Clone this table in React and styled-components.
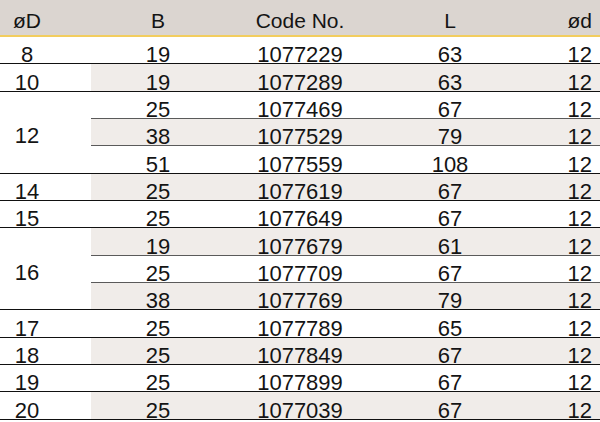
import React from "react";
import styled, { createGlobalStyle } from "styled-components";

const GlobalStyle = createGlobalStyle`
  body {
    margin: 0;
    background: #ffffff;
    font-family: "Liberation Sans", Arial, sans-serif;
    color: #141414;
  }
`;

const groups = [
  { d: 8, rows: [[19, 1077229, 63, 12]] },
  { d: 10, rows: [[19, 1077289, 63, 12]] },
  {
    d: 12,
    rows: [
      [25, 1077469, 67, 12],
      [38, 1077529, 79, 12],
      [51, 1077559, 108, 12],
    ],
  },
  { d: 14, rows: [[25, 1077619, 67, 12]] },
  { d: 15, rows: [[25, 1077649, 67, 12]] },
  {
    d: 16,
    rows: [
      [19, 1077679, 61, 12],
      [25, 1077709, 67, 12],
      [38, 1077769, 79, 12],
    ],
  },
  { d: 17, rows: [[25, 1077789, 65, 12]] },
  { d: 18, rows: [[25, 1077849, 67, 12]] },
  { d: 19, rows: [[25, 1077899, 67, 12]] },
  { d: 20, rows: [[25, 1077039, 67, 12]] },
];

const Table = styled.div`
  width: 600px;
  display: grid;
  grid-template-columns: 91px 134px 150px 150px 75px;
  grid-template-rows: 37px;
  grid-auto-rows: 27.35px;
  font-size: 22px;
`;

const HeadCell = styled.div`
  background: #dbd5d0;
  border-bottom: 2px solid #f2cd5e;
  box-sizing: border-box;
  height: 37px;
  display: flex;
  align-items: flex-end;
  justify-content: ${(p) => (p.$right ? "flex-end" : "center")};
  padding: 0 ${(p) => (p.$right ? "8px" : p.$first ? "37px" : "0")} 4px 0;
  font-size: 21px;
  line-height: 20px;
`;

const DiaCell = styled.div`
  grid-row: span ${(p) => p.$span};
  background: #ffffff;
  border-bottom: 1px solid #111111;
  display: flex;
  justify-content: center;
  align-items: ${(p) => (p.$span > 1 ? "center" : "flex-end")};
  padding-right: 37px;
  padding-top: ${(p) => (p.$span > 1 ? "8px" : "0")};
  line-height: 16px;
`;

const Cell = styled.div`
  background: ${(p) => (p.$shade ? "#f0ece9" : "#ffffff")};
  border-bottom: 1px solid ${(p) => (p.$last ? "#111111" : "#5a5a5a")};
  display: flex;
  align-items: flex-end;
  justify-content: ${(p) => (p.$right ? "flex-end" : "center")};
  padding-right: ${(p) => (p.$right ? "8px" : "0")};
  line-height: 16px;
`;

export default function App() {
  let index = 0;
  return (
    <>
      <GlobalStyle />
      <Table>
        <HeadCell $first>øD</HeadCell>
        <HeadCell>B</HeadCell>
        <HeadCell>Code No.</HeadCell>
        <HeadCell>L</HeadCell>
        <HeadCell $right>ød</HeadCell>
        {groups.map((g) => (
          <React.Fragment key={g.d}>
            <DiaCell $span={g.rows.length}>{g.d}</DiaCell>
            {g.rows.map((r, i) => {
              const shade = index % 2 === 1;
              const last = i === g.rows.length - 1;
              index += 1;
              return (
                <React.Fragment key={r[1]}>
                  <Cell $shade={shade} $last={last}>{r[0]}</Cell>
                  <Cell $shade={shade} $last={last}>{r[1]}</Cell>
                  <Cell $shade={shade} $last={last}>{r[2]}</Cell>
                  <Cell $shade={shade} $last={last} $right>{r[3]}</Cell>
                </React.Fragment>
              );
            })}
          </React.Fragment>
        ))}
      </Table>
    </>
  );
}
